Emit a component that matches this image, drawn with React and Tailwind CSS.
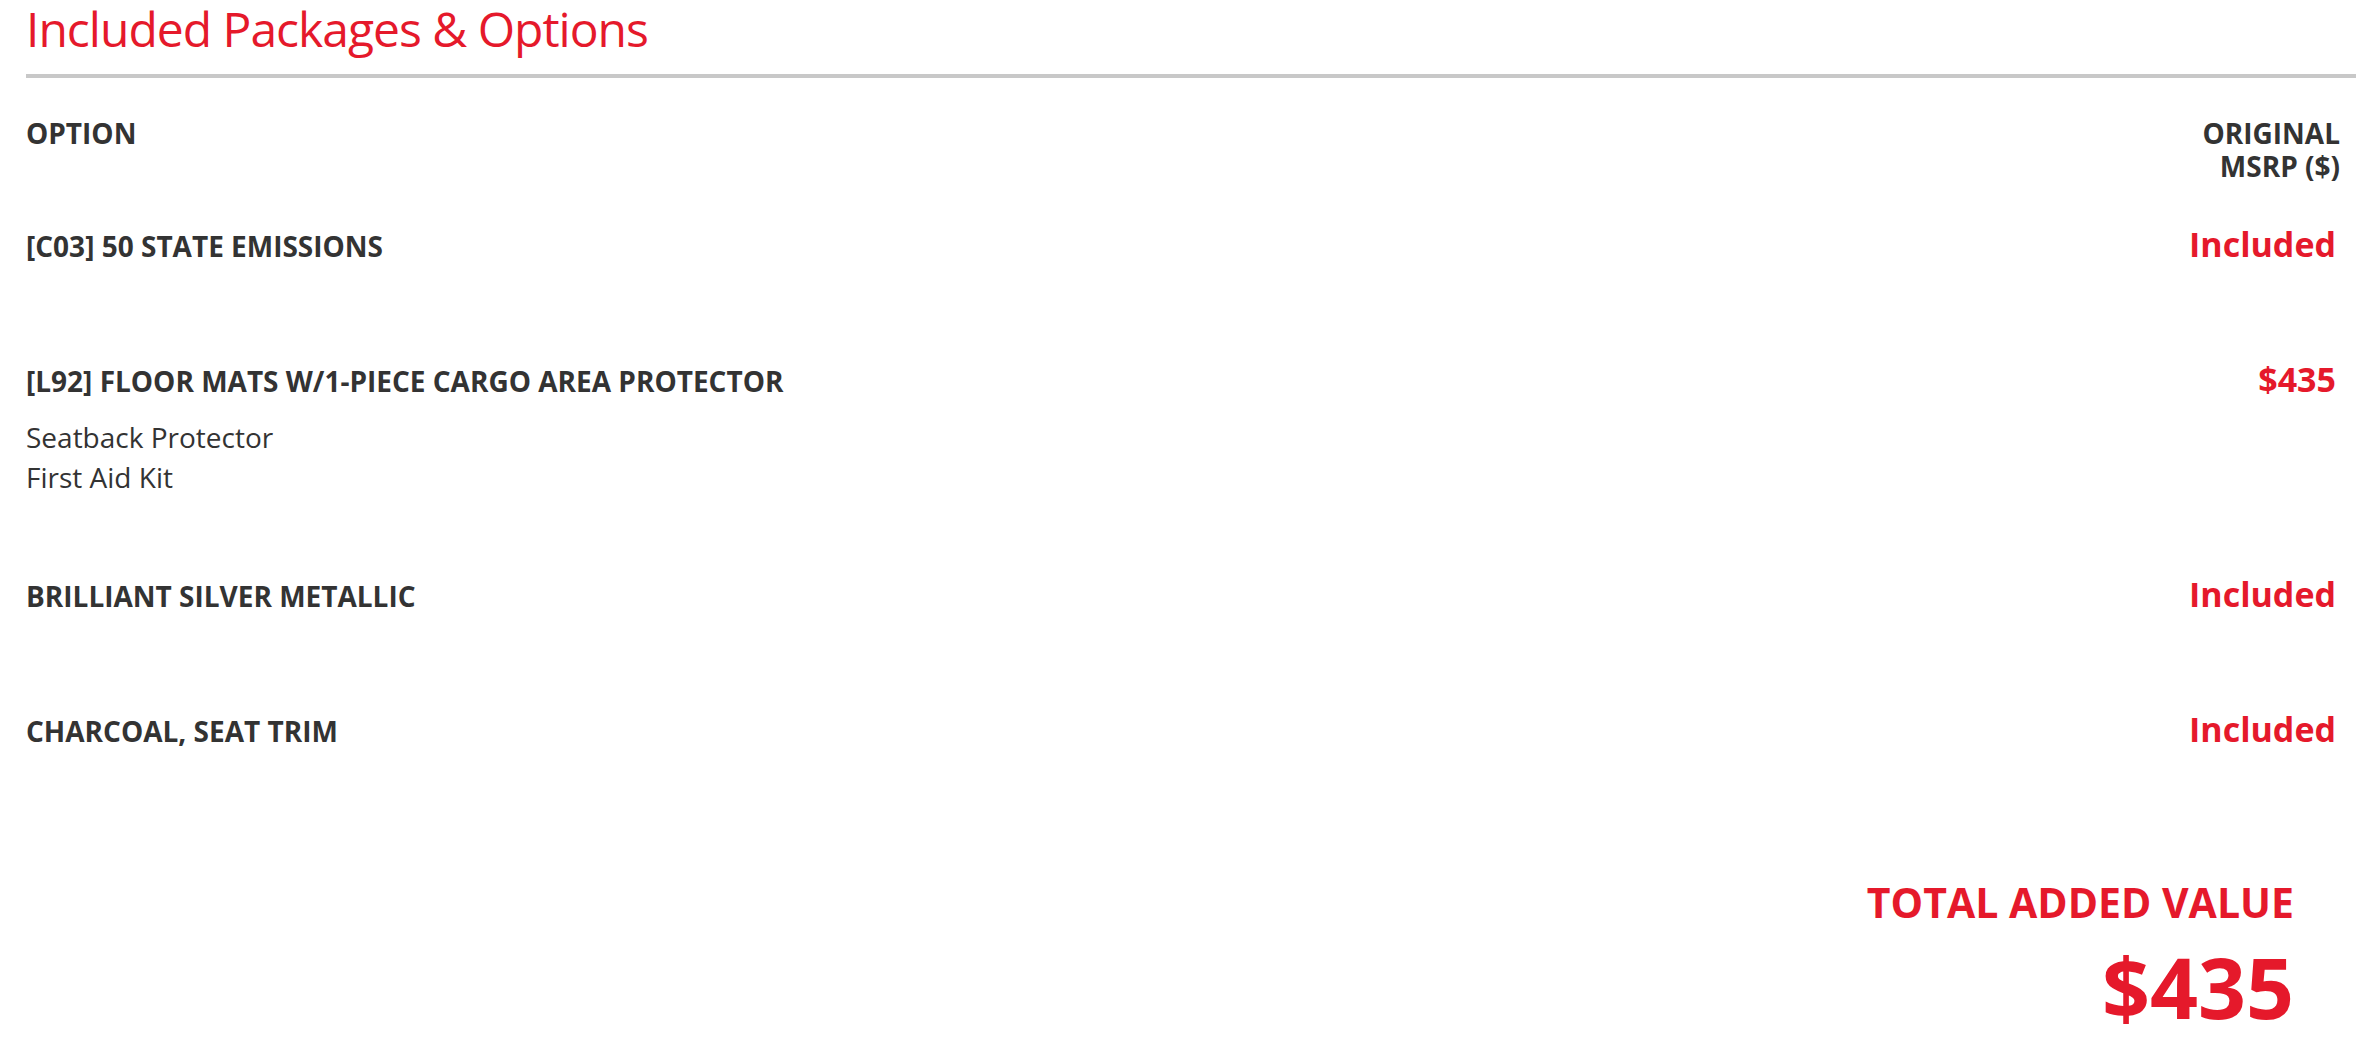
const rows = [
  { code: "[C03] 50 STATE EMISSIONS", price: "Included" },
  {
    code: "[L92] FLOOR MATS W/1-PIECE CARGO AREA PROTECTOR",
    price: "$435",
    items: ["Seatback Protector", "First Aid Kit"],
  },
  { code: "BRILLIANT SILVER METALLIC", price: "Included" },
  { code: "CHARCOAL, SEAT TRIM", price: "Included" },
];

const OptionRow = ({ row }) => {
  return (
    <div className={row.items ? "pb-[77px]" : "pb-[93px]"}>
      <div className="flex items-baseline justify-between">
        <p className="text-[28px] leading-[40px] font-bold uppercase text-[#333]">
          {row.code}
        </p>
        <p className="pr-[4px] text-[34px] leading-[40px] font-bold text-[#e5192b]">
          {row.price}
        </p>
      </div>
      {row.items && (
        <ul className="mt-[16px]">
          {row.items.map((item) => (
            <li key={item} className="text-[28px] leading-[40px] text-[#333]">
              {item}
            </li>
          ))}
        </ul>
      )}
    </div>
  );
};

const App = () => {
  return (
    <div className="min-h-screen bg-white pl-[26px] font-['Open_Sans',sans-serif]">
      <h2 className="text-[48px] leading-[58px] tracking-[-1px] text-[#e5192b]">
        Included Packages &amp; Options
      </h2>
      <div className="mt-[16px] h-[4px] bg-[#c8c8c8]" />

      <div className="pr-[16px]">
        {/* table header */}
        <div className="mt-[39px] flex items-start justify-between text-[28px] leading-[33px] font-bold text-[#333]">
          <span>OPTION</span>
          <span className="text-right">
            ORIGINAL
            <br />
            MSRP ($)
          </span>
        </div>

        <div className="mt-[41px]">
          {rows.map((row) => (
            <OptionRow key={row.code} row={row} />
          ))}
        </div>
      </div>

      {/* total */}
      <div className="mt-[32px] pr-[62px] text-right font-bold text-[#e5192b]">
        <p className="text-[41px] leading-[52px]">TOTAL ADDED VALUE</p>
        <p className="mt-[17px] text-[84px] leading-[84px]">$435</p>
      </div>
    </div>
  );
};

export default App;
